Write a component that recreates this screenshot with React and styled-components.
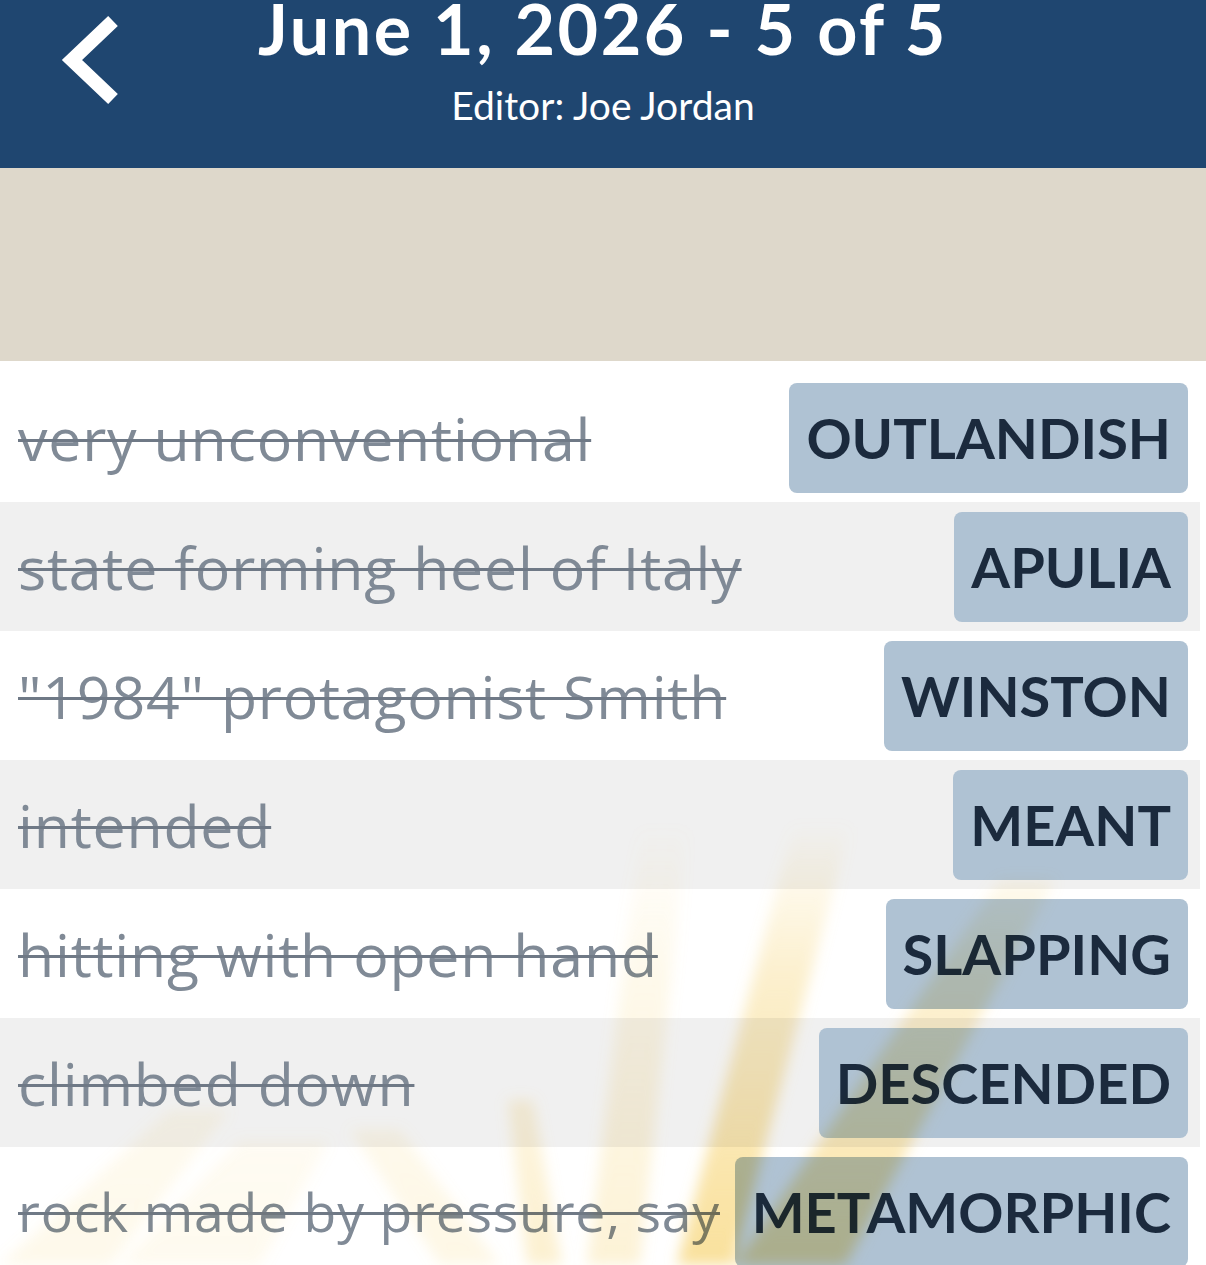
import React from 'react';
import styled, { createGlobalStyle } from 'styled-components';

const GlobalStyle = createGlobalStyle`
  html, body {
    margin: 0;
    padding: 0;
    background: #ffffff;
  }
  body {
    font-family: 'Lato', 'Open Sans', sans-serif;
    overflow: hidden;
  }
`;

const Screen = styled.div`
  position: relative;
  width: 1206px;
  height: 1265px;
  overflow: hidden;
  background: #ffffff;
`;

const Header = styled.header`
  display: grid;
  grid-template-columns: 1fr auto 1fr;
  height: 168px;
  background: #1f4670;
  color: #ffffff;
  overflow: hidden;
`;

const BackButton = styled.button`
  grid-column: 1;
  justify-self: start;
  align-self: start;
  padding: 0;
  border: 0;
  background: none;
  cursor: pointer;
  svg {
    display: block;
  }
`;

const TitleBlock = styled.div`
  grid-column: 2;
  display: flex;
  flex-direction: column;
  align-items: center;
`;

const Title = styled.h1`
  margin: 0;
  font-size: 70px;
  line-height: 0.8;
  font-weight: 700;
  letter-spacing: 2.5px;
  white-space: nowrap;
`;

const Subtitle = styled.div`
  margin-top: 30px;
  font-size: 39px;
  line-height: 1;
  font-weight: 400;
  white-space: nowrap;
`;

const Banner = styled.div`
  height: 193px;
  background: #ded8cb;
`;

const List = styled.ul`
  list-style: none;
  margin: 0;
  padding: 12px 0 0;
`;

const Row = styled.li`
  display: flex;
  align-items: center;
  justify-content: space-between;
  gap: 8px;
  width: 1200px;
  height: 129px;
  box-sizing: border-box;
  padding: 0 18px;
  background: ${(p) => (p.$shaded ? '#f0f0f0' : '#ffffff')};
`;

const Clue = styled.span`
  font-family: 'Open Sans', 'Lato', sans-serif;
  font-size: ${(p) => p.$size}px;
  font-weight: 400;
  letter-spacing: 0.8px;
  color: #808a96;
  text-decoration: line-through;
  text-decoration-thickness: 3px;
  text-decoration-color: #6f7986;
  white-space: nowrap;
`;

const Answer = styled.span`
  flex-shrink: 0;
  display: flex;
  align-items: center;
  height: 110px;
  padding: 0 17px;
  margin-right: -6px;
  border-radius: 8px;
  background: #afc2d3;
  color: #1b2a3d;
  font-size: 56px;
  font-weight: 700;
`;

const Rays = styled.svg`
  position: absolute;
  left: 0;
  top: 0;
  pointer-events: none;
  mix-blend-mode: multiply;
`;

const entries = [
  { clue: 'very unconventional', answer: 'OUTLANDISH', size: 59 },
  { clue: 'state forming heel of Italy', answer: 'APULIA', size: 59 },
  { clue: '"1984" protagonist Smith', answer: 'WINSTON', size: 59 },
  { clue: 'intended', answer: 'MEANT', size: 59 },
  { clue: 'hitting with open hand', answer: 'SLAPPING', size: 59 },
  { clue: 'climbed down', answer: 'DESCENDED', size: 59 },
  { clue: 'rock made by pressure, say', answer: 'METAMORPHIC', size: 53.5 },
];

// soft sunburst beams rising from below the list
const beams = [
  { pts: '677,1265 733,1265 850,827 793,827', o: 0.85 },
  { pts: '735,1265 845,1265 1055,880 1000,880', o: 0.75 },
  { pts: '587,1265 640,1265 687,830 640,830', o: 0.35 },
  { pts: '527,1265 562,1265 533,1100 508,1100', o: 0.4 },
  { pts: '440,1265 500,1265 400,1130 350,1130', o: 0.22 },
  { pts: '0,1265 110,1265 230,1110 170,1110', o: 0.18 },
  { pts: '120,1265 260,1265 330,1140 240,1140', o: 0.14 },
];

export default function App() {
  return (
    <Screen>
      <GlobalStyle />
      <Header>
        <BackButton aria-label="Back">
          <svg width="130" height="120" viewBox="0 0 130 120">
            <polyline
              points="113,21 72,60 113,99"
              fill="none"
              stroke="#ffffff"
              strokeWidth="14"
              strokeLinecap="butt"
              strokeLinejoin="miter"
            />
          </svg>
        </BackButton>
        <TitleBlock>
          <Title>June 1, 2026 - 5 of 5</Title>
          <Subtitle>Editor: Joe Jordan</Subtitle>
        </TitleBlock>
      </Header>
      <Banner />
      <List>
        {entries.map((e, i) => (
          <Row key={e.answer} $shaded={i % 2 === 1}>
            <Clue $size={e.size}>{e.clue}</Clue>
            <Answer>{e.answer}</Answer>
          </Row>
        ))}
      </List>
      <Rays width="1206" height="1265" viewBox="0 0 1206 1265">
        <defs>
          <linearGradient id="beamFade" x1="0" y1="820" x2="0" y2="1265" gradientUnits="userSpaceOnUse">
            <stop offset="0" stopColor="#f7d77e" stopOpacity="0" />
            <stop offset="0.35" stopColor="#f7d77e" stopOpacity="0.45" />
            <stop offset="1" stopColor="#f7d77e" stopOpacity="0.9" />
          </linearGradient>
          <filter id="beamSoft" x="-10%" y="-10%" width="120%" height="120%">
            <feGaussianBlur stdDeviation="7" />
          </filter>
        </defs>
        <g filter="url(#beamSoft)">
          {beams.map((b) => (
            <polygon key={b.pts} points={b.pts} fill="url(#beamFade)" opacity={b.o} />
          ))}
        </g>
      </Rays>
    </Screen>
  );
}
